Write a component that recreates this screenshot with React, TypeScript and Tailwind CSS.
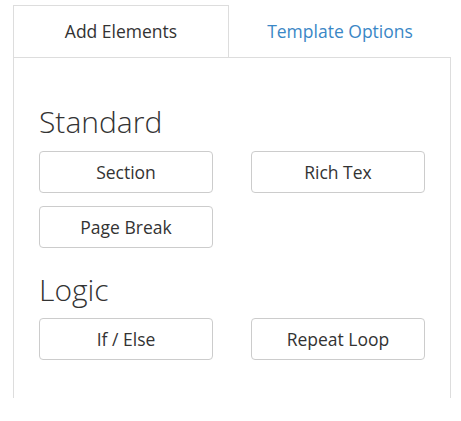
import React from "react";

const font = { fontFamily: '"Open Sans", "Liberation Sans", sans-serif' };

function Btn({ label }: { label: string }) {
  return (
    <div className="h-[42px] border border-[#ccc] rounded-[4px] flex items-center justify-center text-[17.5px] text-[#333] bg-white">
      {label}
    </div>
  );
}

export default function App() {
  return (
    <div
      className="w-[461px] h-[421px] bg-white pt-[5px] pl-[13px] pr-[10px]"
      style={font}
    >
      <div className="flex h-[52px]">
        <div className="w-[216px] border-l border-t border-r border-[#ddd] flex items-center justify-center text-[17.5px] text-[#333]">
          Add Elements
        </div>
        <div className="flex-1 flex items-center justify-center text-[17.5px] text-[#3a87c6]">
          Template Options
        </div>
      </div>
      <div className="h-[341px] border-l border-r border-t border-[#ddd] px-[25px]">
        <h3 className="mt-[47px] mb-[13px] text-[30px] leading-[33px] font-light text-[#333]">
          Standard
        </h3>
        <div className="grid grid-cols-2 gap-x-[38px] gap-y-[13px]">
          <Btn label="Section" />
          <Btn label="Rich Tex" />
          <Btn label="Page Break" />
        </div>
        <h3 className="mt-[25px] mb-[12px] text-[30px] leading-[33px] font-light text-[#333]">
          Logic
        </h3>
        <div className="grid grid-cols-2 gap-x-[38px] gap-y-[13px]">
          <Btn label="If / Else" />
          <Btn label="Repeat Loop" />
        </div>
      </div>
    </div>
  );
}
